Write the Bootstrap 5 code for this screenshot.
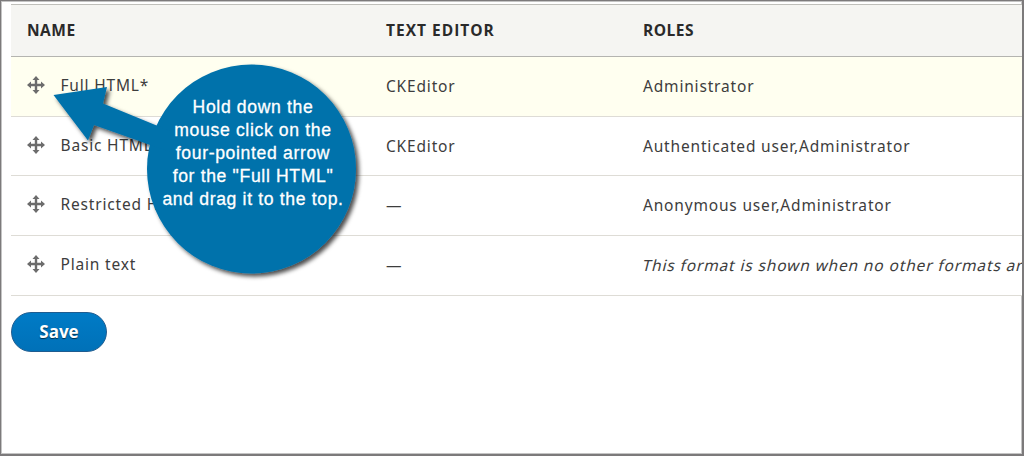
<!DOCTYPE html>
<html lang="en">
<head>
    <meta charset="UTF-8">
    <meta name="viewport" content="width=device-width, initial-scale=1.0">
    <title>Text formats</title>
    <link href="https://cdn.jsdelivr.net/npm/bootstrap@5.3.0/dist/css/bootstrap.min.css" rel="stylesheet">
    <style>
        body {
            font-family: "Noto Sans", "Open Sans", sans-serif;
            font-size: 15.5px;
            background-color: #fff;
        }
        .page-frame {
            height: 456px;
            border: 2px solid #7c7a7b;
            border-top-width: 1px;
            border-left-width: 1px;
            box-shadow: inset 0 0 0 1px #c4c4c4;
            padding: 3px 0 0 10px;
        }
        .formats-table {
            width: 1011px;
            table-layout: fixed;
            border-top: 1px solid #bfbfba;
            letter-spacing: .82px;
        }
        .formats-table > :not(caption) > * > * {
            padding: 0 0 0 16px;
            color: #3d3d3d;
            vertical-align: middle;
            white-space: nowrap;
            line-height: 22px;
        }
        .formats-table > thead > tr > th {
            height: 52px;
            padding-bottom: 1px;
            background-color: #f5f5f2;
            border-bottom: 1px solid #b4b4b0;
            font-family: "Open Sans", sans-serif;
            font-size: 15.5px;
            font-weight: 700;
            letter-spacing: .5px;
            color: #2a2a2a;
        }
        .formats-table > thead > tr > th.col-editor {
            letter-spacing: 1px;
        }
        .formats-table > tbody > tr > td {
            height: 59.7px;
            padding-bottom: 1px;
            background-color: #fff;
            border-bottom: 1px solid #dedcd6;
        }
        .formats-table > tbody > tr > td:first-child {
            padding-bottom: 3px;
        }
        .formats-table > tbody > tr.moved > td {
            background-color: #fffff0;
        }
        /* Slanted upright face, wider than the real italic */
        .formats-table em {
            display: inline-block;
            font-style: normal;
            letter-spacing: .86px;
            transform: skewX(-14deg);
        }
        .col-name { width: 359px; }
        .col-editor { width: 257px; }
        .handle {
            width: 18px;
            height: 18px;
            margin-right: 15.5px;
        }
        .btn-save {
            width: 96px;
            height: 40px;
            margin-top: 16px;
            border: 1px solid #1e5c90;
            border-radius: 20px;
            background: linear-gradient(#007bc6, #0071b8);
            color: #fff;
            font-family: "Open Sans", sans-serif;
            font-size: 17px;
            font-weight: 700;
            line-height: 1;
            padding: 0;
            text-shadow: 0 1px 1px rgba(0, 0, 0, .6);
        }
        /* Help bubble lying over the table */
        .callout {
            left: 0;
            top: 0;
            width: 380px;
            height: 300px;
        }
        .callout-text {
            left: 148px;
            top: 96px;
            width: 210px;
            color: #fff;
            font-family: "Liberation Sans", Arial, sans-serif;
            font-size: 17.6px;
            line-height: 23px;
            letter-spacing: .65px;
            white-space: nowrap;
            -webkit-text-stroke: .3px #fff;
        }
    </style>
</head>
<body>
    <svg class="d-none">
        <symbol id="move" viewBox="0 0 18 18">
            <path fill="#6c6c6c" d="M9 0l3.500 4H10.200v3.800h3.800V5.500L18 9l-4 3.500V10.200h-3.800V14h2.300L9 18l-3.500-4h2.300v-3.800H4v2.300L0 9l4-3.500v2.300h3.800V4H5.500z"/>
        </symbol>
    </svg>

    <div class="page-frame position-relative overflow-hidden">
        <table class="table formats-table mb-0">
            <thead>
                <tr>
                    <th class="col-name">NAME</th>
                    <th class="col-editor">TEXT EDITOR</th>
                    <th>ROLES</th>
                </tr>
            </thead>
            <tbody>
                <tr class="moved">
                    <td><div class="d-flex align-items-center"><svg class="handle"><use href="#move"/></svg><span>Full HTML*</span></div></td>
                    <td>CKEditor</td>
                    <td>Administrator</td>
                </tr>
                <tr>
                    <td><div class="d-flex align-items-center"><svg class="handle"><use href="#move"/></svg><span>Basic HTML</span></div></td>
                    <td>CKEditor</td>
                    <td>Authenticated user,Administrator</td>
                </tr>
                <tr>
                    <td><div class="d-flex align-items-center"><svg class="handle"><use href="#move"/></svg><span>Restricted H</span></div></td>
                    <td>—</td>
                    <td>Anonymous user,Administrator</td>
                </tr>
                <tr>
                    <td><div class="d-flex align-items-center"><svg class="handle"><use href="#move"/></svg><span>Plain text</span></div></td>
                    <td>—</td>
                    <td><em>This format is shown when no other formats ar</em></td>
                </tr>
            </tbody>
        </table>
        <button type="button" class="btn btn-save">Save</button>
    </div>

    <svg class="callout position-absolute" viewBox="0 0 380 300">
        <defs>
            <filter id="shade" x="-10%" y="-10%" width="120%" height="120%">
                <feDropShadow dx="3" dy="3" stdDeviation="2" flood-color="#000" flood-opacity=".7"/>
            </filter>
        </defs>
        <g fill="#0072ab" filter="url(#shade)">
            <circle cx="251.500" cy="169" r="104.500"/>
            <path d="M53.500 95L107 87l-4 16.500L170 131v21L94 125l-6 15.500z"/>
        </g>
    </svg>
    <div class="callout-text position-absolute text-center">Hold down the<br>mouse click on the<br>four-pointed arrow<br>for the "Full HTML"<br>and drag it to the top.</div>

    <script src="https://cdn.jsdelivr.net/npm/bootstrap@5.3.0/dist/js/bootstrap.bundle.min.js"></script>
</body>
</html>
